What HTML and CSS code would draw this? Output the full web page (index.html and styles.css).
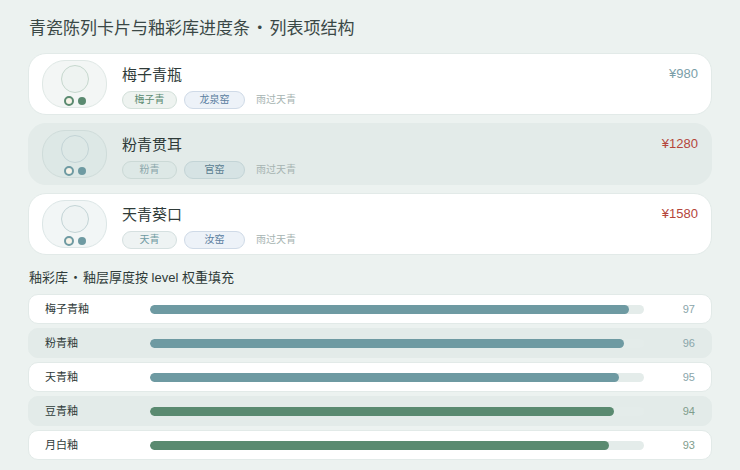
FILE: index.html
```html
<!DOCTYPE html>
<html lang="zh-CN">
<head>
<meta charset="utf-8">
<title>青瓷陈列</title>
<link rel="stylesheet" href="styles.css">
</head>
<body>
<main class="page">
  <h1 class="page-title">青瓷陈列卡片与釉彩库进度条<span class="sep"> · </span>列表项结构</h1>

  <ul class="cards">
    <li class="card card--plain glaze-green">
      <div class="thumb">
        <span class="thumb-disc"></span>
        <span class="thumb-dots"><i class="ring"></i><i class="dot"></i></span>
      </div>
      <div class="info">
        <div class="info-top">
          <span class="name">梅子青瓶</span>
          <span class="price price--cool">¥980</span>
        </div>
        <div class="tags">
          <span class="tag tag-glaze">梅子青</span>
          <span class="tag tag-kiln">龙泉窑</span>
          <span class="note">雨过天青</span>
        </div>
      </div>
    </li>

    <li class="card card--shade glaze-teal">
      <div class="thumb">
        <span class="thumb-disc"></span>
        <span class="thumb-dots"><i class="ring"></i><i class="dot"></i></span>
      </div>
      <div class="info">
        <div class="info-top">
          <span class="name">粉青贯耳</span>
          <span class="price price--warm">¥1280</span>
        </div>
        <div class="tags">
          <span class="tag tag-glaze">粉青</span>
          <span class="tag tag-kiln">官窑</span>
          <span class="note">雨过天青</span>
        </div>
      </div>
    </li>

    <li class="card card--plain glaze-teal">
      <div class="thumb">
        <span class="thumb-disc"></span>
        <span class="thumb-dots"><i class="ring"></i><i class="dot"></i></span>
      </div>
      <div class="info">
        <div class="info-top">
          <span class="name">天青葵口</span>
          <span class="price price--warm">¥1580</span>
        </div>
        <div class="tags">
          <span class="tag tag-glaze">天青</span>
          <span class="tag tag-kiln">汝窑</span>
          <span class="note">雨过天青</span>
        </div>
      </div>
    </li>
  </ul>

  <h2 class="section-title">釉彩库<span class="sep"> · </span>釉层厚度按 level 权重填充</h2>

  <ul class="levels">
    <li class="level level--plain level-teal">
      <span class="level-name">梅子青釉</span>
      <span class="track"><span class="fill" style="width:97%"></span></span>
      <span class="level-value">97</span>
    </li>
    <li class="level level--shade level-teal">
      <span class="level-name">粉青釉</span>
      <span class="track"><span class="fill" style="width:96%"></span></span>
      <span class="level-value">96</span>
    </li>
    <li class="level level--plain level-teal">
      <span class="level-name">天青釉</span>
      <span class="track"><span class="fill" style="width:95%"></span></span>
      <span class="level-value">95</span>
    </li>
    <li class="level level--shade level-green">
      <span class="level-name">豆青釉</span>
      <span class="track"><span class="fill" style="width:94%"></span></span>
      <span class="level-value">94</span>
    </li>
    <li class="level level--plain level-green">
      <span class="level-name">月白釉</span>
      <span class="track"><span class="fill" style="width:93%"></span></span>
      <span class="level-value">93</span>
    </li>
  </ul>
</main>
</body>
</html>
```

FILE: styles.css
```css
* { box-sizing: border-box; }

html, body {
  margin: 0;
  padding: 0;
  background: #ecf2f0;
}

body {
  font-family: "Liberation Sans", "Noto Sans CJK SC", sans-serif;
  color: #2f3b39;
}

/* full-width separator dot with narrow spaces */
.sep {
  font-family: "Noto Sans CJK SC", sans-serif;
  line-height: 1;
  white-space: pre;
  word-spacing: -0.15em;
}

.page {
  padding: 18px 28px 0 28px;
}

.page-title {
  margin: 0 0 13px 1px;
  font-size: 17px;
  line-height: 22px;
  height: 22px;
  font-weight: 400;
  color: #3a4846;
}

/* ---- exhibit cards ---- */
.cards {
  list-style: none;
  margin: 0;
  padding: 0;
  display: flex;
  flex-direction: column;
  gap: 8px;
}

.card {
  display: flex;
  align-items: center;
  gap: 15px;
  height: 62px;
  padding: 6px 13px;
  border-radius: 18px;
  border: 1px solid #e2eae8;
}

.card--plain { background: #ffffff; }
.card--shade { background: #e3ebe9; border-color: #e3ebe9; }

.thumb {
  flex: 0 0 65px;
  height: 48px;
  border-radius: 23px;
  display: flex;
  flex-direction: column;
  align-items: center;
  padding-top: 4px;
  gap: 3px;
  background: #f3f6f5;
  border: 1px solid #dfe8e5;
}

.thumb-disc {
  width: 28px;
  height: 28px;
  border-radius: 50%;
  border: 1.5px solid #c6d8ce;
  background: #eef3f1;
}

.thumb-dots {
  display: flex;
  align-items: center;
  gap: 4px;
  height: 10px;
}

.thumb-dots i {
  display: block;
  border-radius: 50%;
}

.ring {
  width: 10px;
  height: 10px;
  border: 2px solid #5a8a70;
  background: #f8f3e8;
}

.dot {
  width: 8px;
  height: 8px;
  background: #5a8a70;
}

.card--shade .thumb {
  background: #dde8e6;
  border-color: #cfdcda;
}
.card--shade .thumb-disc {
  background: #dde8e6;
  border-color: #b9cecc;
}
.glaze-teal .thumb-disc { border-color: #c3d4d6; }
.card--plain.glaze-teal .thumb { background: #f2f6f6; border-color: #dce6e6; }
.card--plain.glaze-teal .thumb-disc { background: #eef3f3; }
.glaze-teal .ring { border-color: #6e9aa2; }
.glaze-teal .dot { background: #6e9aa2; }

.info {
  flex: 1;
  display: flex;
  flex-direction: column;
  gap: 6px;
  margin-top: 6px;
}

.info-top {
  display: flex;
  justify-content: space-between;
  align-items: flex-start;
}

.name {
  font-size: 15px;
  line-height: 20px;
  color: #2f3b39;
}

.price {
  font-size: 13px;
  line-height: 18px;
}
.price--cool { color: #7a9ea8; }
.price--warm { color: #b4453a; }

.tags {
  display: flex;
  align-items: center;
  height: 18px;
}

.tag {
  height: 18px;
  border-radius: 9px;
  border: 1px solid;
  font-size: 10px;
  line-height: 16px;
  text-align: center;
}

.tag-glaze {
  width: 55px;
  margin-right: 7px;
  background: #eef3f0;
  border-color: #d3e0da;
  color: #5a8a70;
}

.tag-kiln {
  width: 61px;
  margin-right: 11px;
  background: #edf2f8;
  border-color: #cfdae7;
  color: #5a7ea0;
}

.glaze-teal .tag-glaze {
  background: #eef3f3;
  border-color: #d5e0e0;
  color: #6e9aa2;
}

.card--shade .tag-glaze {
  background: #dde8e6;
  border-color: #cbd9d6;
  color: #8aa6aa;
}

.card--shade .tag-kiln {
  background: #d6e3e4;
  border-color: #c3d4d6;
  color: #5a7e90;
}

.note {
  font-size: 10px;
  line-height: 16px;
  color: #a7b4b2;
}

/* ---- glaze levels ---- */
.section-title {
  margin: 14px 0 7px 1px;
  font-size: 13px;
  line-height: 18px;
  height: 18px;
  font-weight: 400;
  color: #2f3b39;
}

.levels {
  list-style: none;
  margin: 0;
  padding: 0;
  display: flex;
  flex-direction: column;
  gap: 4px;
}

.level {
  display: flex;
  align-items: center;
  height: 30px;
  padding: 0 16px;
  border-radius: 10px;
  border: 1px solid #e2eae8;
}

.level--plain { background: #ffffff; }
.level--shade { background: #e3ebe9; border-color: #e3ebe9; }

.level-name {
  flex: 0 0 105px;
  font-size: 11px;
  line-height: 16px;
  color: #2f3b39;
}

.track {
  flex: 1;
  height: 9px;
  border-radius: 5px;
  background: #e4ecea;
  overflow: hidden;
}

.fill {
  display: block;
  height: 100%;
  border-radius: 5px;
}

.level-teal .fill { background: #6e9aa2; }
.level-green .fill { background: #5a8a70; }

.level-value {
  flex: 0 0 51px;
  text-align: right;
  font-size: 11px;
  line-height: 16px;
}

.level-teal .level-value { color: #8aa6aa; }
.level-green .level-value { color: #7f9d8c; }
```
